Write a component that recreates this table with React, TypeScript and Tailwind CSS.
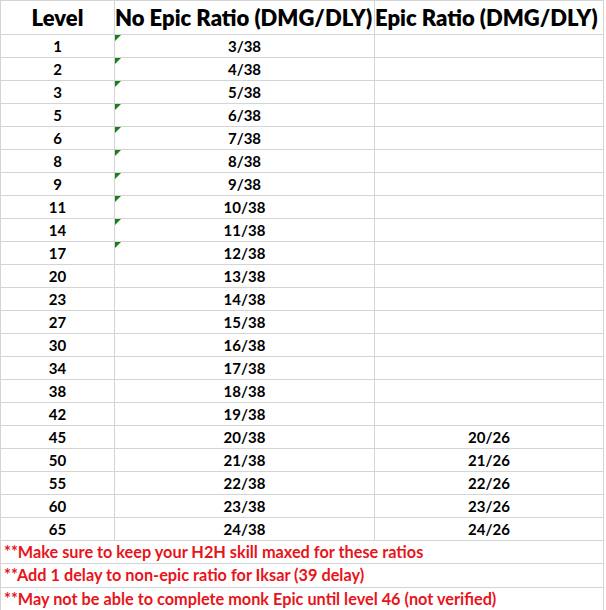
import React from "react";

type TRow = { level: number; noEpic: string; epic?: string; flag?: boolean };

const rows: TRow[] = [
  { level: 1, noEpic: "3/38", flag: true },
  { level: 2, noEpic: "4/38", flag: true },
  { level: 3, noEpic: "5/38", flag: true },
  { level: 5, noEpic: "6/38", flag: true },
  { level: 6, noEpic: "7/38", flag: true },
  { level: 8, noEpic: "8/38", flag: true },
  { level: 9, noEpic: "9/38", flag: true },
  { level: 11, noEpic: "10/38", flag: true },
  { level: 14, noEpic: "11/38", flag: true },
  { level: 17, noEpic: "12/38", flag: true },
  { level: 20, noEpic: "13/38" },
  { level: 23, noEpic: "14/38" },
  { level: 27, noEpic: "15/38" },
  { level: 30, noEpic: "16/38" },
  { level: 34, noEpic: "17/38" },
  { level: 38, noEpic: "18/38" },
  { level: 42, noEpic: "19/38" },
  { level: 45, noEpic: "20/38", epic: "20/26" },
  { level: 50, noEpic: "21/38", epic: "21/26" },
  { level: 55, noEpic: "22/38", epic: "22/26" },
  { level: 60, noEpic: "23/38", epic: "23/26" },
  { level: 65, noEpic: "24/38", epic: "24/26" },
];

const notes = [
  { text: "**Make sure to keep your H2H skill maxed for these ratios", h: "h-[23px]" },
  { text: "**Add 1 delay to non-epic ratio for Iksar (39 delay)", h: "h-[24px]" },
  { text: "**May not be able to complete monk Epic until level 46 (not verified)", h: "h-[23px]" },
];

const cell = "border-r border-b border-[#d4d4d4] flex items-center";

export default function App() {
  return (
    <div className="bg-white w-[606px] h-[610px] overflow-hidden font-['Lato',sans-serif] text-black">
      <div className="w-[604px] border-l border-t border-[#d4d4d4]">
        {/* header */}
        <div className="flex h-[34px] font-extrabold text-[22px] leading-none">
          <div className={`${cell} w-[114px] justify-center`}>Level</div>
          <div className={`${cell} w-[260px] whitespace-nowrap`}>No Epic Ratio (DMG/DLY)</div>
          <div className={`${cell} w-[229px] whitespace-nowrap`}>Epic Ratio (DMG/DLY)</div>
        </div>
        {rows.map((r) => (
          <div key={r.level} className="flex h-[23px] font-bold text-[15px] leading-none">
            <div className={`${cell} w-[114px] justify-center`}>{r.level}</div>
            <div className={`${cell} w-[260px] justify-center relative`}>
              {r.flag && (
                <span className="absolute left-0 top-0 w-0 h-0 border-t-[6px] border-r-[6px] border-t-[#1a7f1a] border-r-transparent" />
              )}
              {r.noEpic}
            </div>
            <div className={`${cell} w-[229px] justify-center`}>{r.epic}</div>
          </div>
        ))}
        {notes.map((n) => (
          <div
            key={n.text}
            className={`${n.h} border-r border-b border-[#d4d4d4] flex items-center pl-[3px] font-bold text-[16.3px] leading-none text-[#e8141b] whitespace-nowrap`}
          >
            {n.text}
          </div>
        ))}
      </div>
    </div>
  );
}
